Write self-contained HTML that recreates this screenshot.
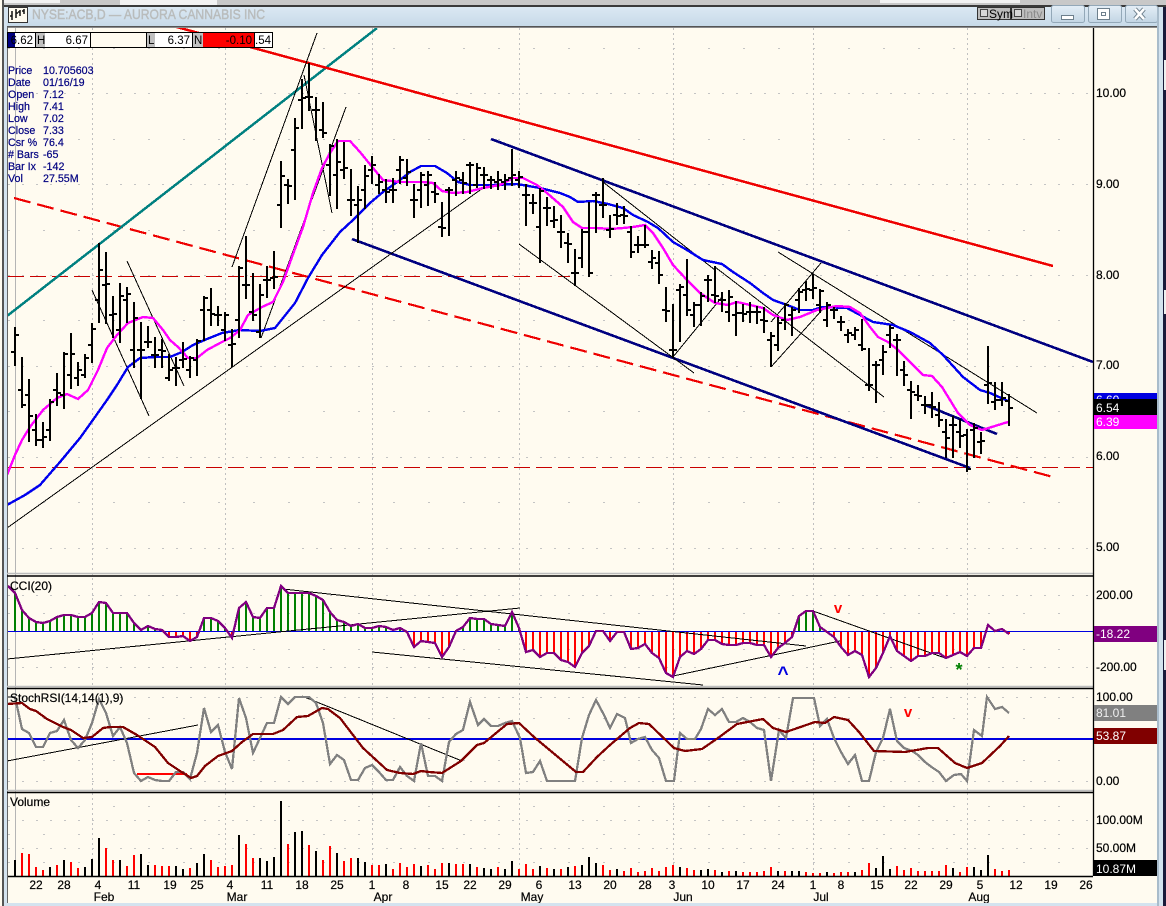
<!DOCTYPE html>
<html><head><meta charset="utf-8"><title>NYSE:ACB,D</title>
<style>
html,body{margin:0;padding:0;background:#fffbf0}
svg{display:block}
text{font-family:"Liberation Sans",sans-serif;font-size:12px;fill:#000}
.k text{stroke:#000;stroke-width:.2px}
.i text{font-size:10.7px;fill:#000080;stroke:#000080;stroke-width:.2px}
.c{text-anchor:middle}
.t{stroke:#b9bcbc;stroke-width:.45px}
</style></head><body>
<svg xmlns="http://www.w3.org/2000/svg" width="1166" height="906" viewBox="0 0 1166 906">
<defs>
<linearGradient id="tb" x1="0" y1="0" x2="0" y2="1"><stop offset="0" stop-color="#dbe8f3"/><stop offset="1" stop-color="#c6d9e8"/></linearGradient>
<linearGradient id="bt" x1="0" y1="0" x2="0" y2="1"><stop offset="0" stop-color="#e4eef6"/><stop offset="1" stop-color="#c2d5e4"/></linearGradient>
<clipPath id="p1"><rect x="8" y="28" width="1085" height="546"/></clipPath>
<clipPath id="p2"><rect x="8" y="577" width="1085" height="109"/></clipPath>
<clipPath id="p3"><rect x="8" y="689" width="1085" height="100"/></clipPath>
</defs>
<!-- window frame -->
<rect width="1166" height="906" fill="#d4e3ef"/>
<rect x="0" y="0" width="1166" height="6" fill="#c8c8c8"/>
<rect x="120" y="0" width="97" height="5" fill="#f2f2f2"/>
<rect x="0" y="0" width="60" height="3" fill="#f2f2f2"/>
<rect x="880" y="0" width="140" height="3" fill="#f2f2f2"/>
<rect x="0" y="5" width="1166" height="2" fill="#3a3a3a"/>
<rect x="0" y="7" width="1166" height="20" fill="url(#tb)"/>
<rect x="0" y="0" width="3" height="906" fill="#fffbf0"/>
<rect x="2" y="0" width="2" height="906" fill="#555"/>
<rect x="4" y="7" width="3" height="899" fill="#d4e3ef"/>
<rect x="1163" y="7" width="3" height="899" fill="#1a1a3a"/>
<rect x="1164" y="60" width="2" height="30" fill="#f0f0f0"/>
<rect x="1164" y="290" width="2" height="24" fill="#f0f0f0"/>
<rect x="1164" y="640" width="2" height="30" fill="#f0f0f0"/>
<!-- title -->
<rect x="8.5" y="7.5" width="19" height="15" fill="#fffbf0" stroke="#333"/>
<path d="M12 11V20M16 9V18M20 10V16M24 9V14M10 16h2M16 13h2M18 12h2M22 11h2" stroke="#111" stroke-width="1.5" fill="none"/>
<text x="32" y="19" class="t" style="font-size:14px;fill:#b9bcbc" textLength="233" lengthAdjust="spacingAndGlyphs">NYSE:ACB,D — AURORA CANNABIS INC</text>
<!-- sym/intv -->
<rect x="977.5" y="7.5" width="33" height="12" fill="#bdbdbd" stroke="#333"/>
<rect x="1011.5" y="7.5" width="33" height="12" fill="#bdbdbd" stroke="#333"/>
<rect x="980.5" y="9.5" width="7" height="7" fill="#d8d8d8" stroke="#444"/>
<rect x="1014.5" y="9.5" width="7" height="7" fill="#d8d8d8" stroke="#444"/>
<text x="989" y="18" style="font-size:12px">Sym</text>
<text x="1023" y="18" style="font-size:12px;fill:#8a8a8a">Intv</text>
<!-- window buttons -->
<rect x="1051.5" y="5.5" width="33" height="17" rx="2" fill="url(#bt)" stroke="#93a8b8"/>
<rect x="1088.5" y="5.5" width="33" height="17" rx="2" fill="url(#bt)" stroke="#93a8b8"/>
<rect x="1125.5" y="5.5" width="32" height="17" rx="2" fill="url(#bt)" stroke="#93a8b8"/>
<rect x="1061.5" y="15.5" width="12" height="4" fill="#fff" stroke="#6d7f8c"/>
<rect x="1097.5" y="8.5" width="12" height="11" fill="#fff" stroke="#6d7f8c"/>
<rect x="1101.5" y="12.5" width="4" height="3" fill="#fff" stroke="#6d7f8c"/>
<path d="M1135 9L1144 19M1144 9L1135 19" stroke="#6d7f8c" stroke-width="4.5"/>
<path d="M1135 9L1144 19M1144 9L1135 19" stroke="#fff" stroke-width="2.6"/>
<!-- chart background -->
<rect x="7" y="27" width="1150" height="876" fill="#fffbf0"/>
<rect x="7" y="27" width="1150" height="1" fill="#8a8a8a"/>
<rect x="7" y="26" width="1150" height="1" fill="#555"/>
<rect x="7" y="27" width="1" height="876" fill="#666"/>
<rect x="1157" y="7" width="2" height="899" fill="#a9bccb"/>
<rect x="1159" y="7" width="4" height="899" fill="#d4e3ef"/>
<!-- vertical grid -->
<path d="M15.5 28V876" stroke="#b5b5b5" stroke-width="1"/>
<path d="M92.5 28V876M225.5 28V876M372.5 28V876M519.5 28V876M673.5 28V876M813.5 28V876M967.5 28V876" stroke="#c0c0c0" stroke-width="1" stroke-dasharray="2 3"/>
<!-- horizontal grid majors -->
<path d="M8 93.5H1093M8 184.5H1093M8 275.5H1093M8 366.5H1093M8 457.5H1093M8 548.5H1093M8 595.5H1093M8 667.5H1093M8 697.5H1093M8 781.5H1093M8 820.5H1093M8 848.5H1093" stroke="#c4c4c4" stroke-width="1" stroke-dasharray="2 12"/>
<path d="M8 48.5H1093M8 139.5H1093M8 230.5H1093M8 320.5H1093M8 411.5H1093M8 502.5H1093M8 613.5H1093M8 649.5H1093M8 718.5H1093M8 760.5H1093M8 806.5H1093M8 834.5H1093M8 862.5H1093" stroke="#c4c4c4" stroke-width="1" stroke-dasharray="2 33"/>
<!-- PRICE PANEL -->
<g clip-path="url(#p1)" fill="none" shape-rendering="crispEdges">
<path d="M8 276.5H570" stroke="#c80000" stroke-width="1" stroke-dasharray="16 6"/>
<path d="M8 467.5H1093" stroke="#c80000" stroke-width="1" stroke-dasharray="16 6"/>
<path d="M14 198L1053 477" stroke="#ee0000" stroke-width="2.2" stroke-dasharray="17 7"/>
<path d="M7 316L377 28" stroke="#008080" stroke-width="2.5"/>
<path d="M173 26L1053 266" stroke="#ee0000" stroke-width="2.5"/>
<path d="M491 139L1093 362M352 239L970 468M925 405L997 434" stroke="#000080" stroke-width="2.6"/>
<path d="M7 528L483 188M232 267L317 33M261 338L346 107M304 75L332 213M92 290L149 416M127 261L184 386M519 244L694 373M603 182L715 270M715 267L884 397M778 252L1037 413M673 357L722 297M771 367L822 310M771 322L821 263" stroke="#000" stroke-width="1"/>
<path d="M7 505L25 495L40 485L60 462L80 438L95 417L107 400L117 385L128 367L140 358L155 357L170 357L182 352L193 345L207 339L222 333L240 330L260 331L275 328L295 303L308 278L322 255L340 232L353 220L370 203L383 192L400 180L410 172L421 166L435 166L447 173L458 182L470 185L493 185L517 184L540 188L560 193L570 197L578 202L593 201L608 204L623 208L633 215L648 222L658 228L673 242L687 250L703 260L722 264L733 272L750 283L763 293L773 300L787 305L800 310L813 310L822 307L847 308L860 315L873 322L893 325L910 332L930 343L943 355L963 377L980 390L990 393L1008 401" stroke="#0000ee" stroke-width="2.4"/>
<path d="M7 475L15 455L22 440L30 427L43 410L57 398L67 394L78 399L88 390L98 370L107 348L117 335L128 323L143 317L153 318L163 330L170 340L178 347L188 358L197 358L207 350L220 343L230 338L240 330L248 315L262 307L273 302L283 282L292 257L303 227L313 193L322 168L330 153L338 141L350 141L360 152L373 168L383 180L400 182L413 182L423 182L433 183L442 191L453 193L467 192L483 188L500 185L513 178L523 178L537 185L547 193L563 207L573 222L582 228L597 228L610 229L623 228L633 227L645 225L653 233L663 248L673 265L687 280L700 293L715 303L728 305L737 302L750 305L763 308L773 315L787 320L800 317L817 310L837 306L850 307L860 313L870 327L878 337L888 342L898 350L910 362L923 375L932 376L942 387L950 400L958 413L970 425L982 430L1008 422" stroke="#ff00ff" stroke-width="2.4"/>
<path stroke="#000" stroke-width="2" stroke-linecap="square" d="M15 328V365M12 352H15M15 335H18M22 358V407M19 390H22M22 405H25M29 380V441M26 395H29M29 416H32M36 415V445M33 430H36M36 440H39M43 423V447M40 440H43M43 437H46
M50 400V440M47 430H50M50 402H53M57 374V405M54 390H57M57 393H60M64 353V408M61 395H64M64 354H67M71 334V388M68 375H71M71 354H74M78 363V385M75 378H78M78 370H81
M85 355V377M82 375H85M85 358H88M92 324V362M89 345H92M92 329H95M99 244V322M96 300H99M99 270H102M106 253V323M103 285H106M106 284H109M113 297V337M110 315H113M113 314H116
M120 284V342M117 330H120M120 296H123M127 288V322M124 300H127M127 294H130M134 303V367M131 350H134M134 318H137M141 323V398M138 350H141M141 350H144M148 327V347M145 342H148M148 342H151
M155 338V367M152 355H155M155 355H158M162 340V367M159 350H162M162 351H165M169 355V380M166 378H169M169 370H172M176 358V385M173 368H176M176 368H179M183 343V367M180 360H183M183 359H186
M190 357V377M187 370H190M190 358H193M197 340V375M194 360H197M197 341H200M204 297V340M201 310H204M204 298H207M211 289V325M208 310H211M211 314H214M218 307V325M215 315H218M218 315H221
M225 313V340M222 330H225M225 315H228M232 330V366M229 345H232M232 344H235M239 267V337M236 320H239M239 268H242M246 237V298M243 285H246M246 285H249M253 274V320M250 312H253M253 315H256
M260 285V337M257 332H260M260 295H263M267 267V297M264 280H267M267 280H270M274 252V288M271 278H274M274 277H277M281 162V227M278 205H281M281 176H284M288 180V203M285 185H288M288 186H291
M295 119V199M292 150H295M295 128H298M302 80V128M299 100H302M302 98H305M309 64V110M306 97H309M309 97H312M316 98V140M313 110H316M316 110H319M323 103V137M320 130H323M323 133H326
M330 145V195M327 165H330M330 146H333M337 140V208M334 175H337M337 162H340M344 143V178M341 170H344M344 168H347M351 170V215M348 200H351M351 200H354M358 187V242M355 205H358M358 200H361
M365 166V208M362 190H365M365 176H368M372 157V183M369 170H372M372 165H375M379 175V193M376 185H379M379 182H382M386 180V202M383 190H386M386 192H389M393 179V202M390 190H393M393 190H396
M400 157V183M397 170H400M400 160H403M407 160V185M404 178H407M407 172H410M414 185V217M411 200H414M414 200H417M421 173V207M418 190H421M421 175H424M428 172V205M425 185H428M428 175H431
M435 183V202M432 192H435M435 194H438M442 203V236M439 227H442M442 228H445M449 188V235M446 190H449M449 190H452M456 172V195M453 180H456M456 178H459M463 173V193M460 180H463M463 183H466
M470 163V193M467 165H470M470 165H473M477 164V187M474 185H477M477 168H480M484 168V188M481 175H484M484 175H487M491 177V188M488 180H491M491 180H494M498 172V189M495 182H498M498 180H501
M505 175V189M502 182H505M505 180H508M512 150V185M509 178H512M512 175H515M519 172V187M516 180H519M519 177H522M526 185V225M523 195H526M526 195H529M533 195V213M530 203H533M533 203H536
M540 189V262M537 227H540M540 191H543M547 198V225M544 208H547M547 208H550M554 207V227M551 221H554M554 220H557M561 216V247M558 232H561M561 232H564M568 234V262M565 243H568M568 244H571
M575 250V285M572 273H575M575 273H578M582 230V267M579 258H582M582 232H585M589 203V276M586 232H589M589 273H592M596 193V232M593 195H596M596 195H599M603 179V217M600 205H603M603 205H606
M610 216V237M607 230H610M610 229H613M617 204V224M614 215H617M617 216H620M624 207V223M621 215H624M624 216H627M631 227V257M628 232H631M631 252H634M638 237V252M635 245H638M638 245H641
M645 226V247M642 245H645M645 245H648M652 251V268M649 262H652M652 258H655M659 252V283M656 263H659M659 275H662M666 288V321M663 310H666M666 311H669M673 305V357M670 350H673M673 350H676
M680 285V341M677 290H680M680 287H683M687 260V315M684 295H687M687 310H690M694 303V326M691 315H694M694 305H697M701 293V325M698 305H701M701 296H704M708 276V301M705 280H708M708 280H711
M715 267V302M712 295H715M715 296H718M722 293V311M719 300H722M722 300H725M729 291V321M726 312H729M729 297H732M736 302V335M733 315H736M736 313H739M743 305V321M740 313H743M743 314H746
M750 303V322M747 312H750M750 312H753M757 307V323M754 312H757M757 312H760M764 308V332M761 320H764M764 321H767M771 333V366M768 340H771M771 336H774M778 318V350M775 345H778M778 323H781
M785 304V329M782 320H785M785 305H788M792 308V335M789 315H792M792 310H795M799 289V312M796 300H799M799 292H802M806 282V300M803 290H806M806 289H809M813 275V298M810 290H813M813 288H816
M820 290V312M817 305H820M820 291H823M827 303V326M824 320H827M827 305H830M834 308V318M831 310H834M834 310H837M841 317V330M838 322H841M841 322H844M848 330V342M845 335H848M848 333H851
M855 328V339M852 335H855M855 330H858M862 320V350M859 345H862M862 349H865M869 349V390M866 385H869M869 385H872M876 362V402M873 365H876M876 365H879M883 346V374M880 360H883M883 352H886
M890 326V347M887 335H890M890 328H893M897 335V375M894 340H897M897 340H900M904 362V385M901 370H904M904 375H907M911 382V418M908 390H911M911 392H914M918 386V400M915 395H918M918 396H921
M925 397V413M922 405H925M925 405H928M932 393V417M929 405H932M932 407H935M939 403V426M936 415H939M939 420H942M946 420V457M943 432H946M946 438H949M953 417V457M950 425H953M953 425H956
M960 420V447M957 432H960M960 436H963M967 430V471M964 435H967M967 469H970M974 424V457M971 430H974M974 428H977M981 433V453M978 442H981M981 441H984M988 347V403M985 385H988M988 383H991
M995 383V409M992 402H995M995 400H998M1002 383V405M999 400H1002M1002 398H1005M1009 395V425M1006 401H1009M1009 408H1012"/>
</g>
<!-- header boxes -->
<rect x="7.5" y="32.5" width="265" height="15" fill="#fffbf0" stroke="#000"/>
<rect x="8" y="33" width="7" height="14" fill="#000080"/>
<rect x="15" y="33" width="20" height="14" fill="#fff"/>
<rect x="36" y="33" width="9" height="14" fill="#c0c0c0"/>
<rect x="45" y="33" width="45" height="14" fill="#fff"/>
<rect x="147" y="33" width="8" height="14" fill="#c0c0c0"/>
<rect x="155" y="33" width="37" height="14" fill="#fff"/>
<rect x="193" y="33" width="10" height="14" fill="#c0c0c0"/>
<rect x="203" y="33" width="51" height="14" fill="#f00"/>
<rect x="254" y="33" width="18" height="14" fill="#fff"/>
<path d="M35.5 32V47M90.5 32V47M146.5 32V47M192.5 32V47M254.5 32V47" stroke="#000"/>
<g>
<text x="33" y="44" text-anchor="end" style="font-size:11.5px">6.62</text>
<text x="37" y="44" style="font-size:11.5px">H</text>
<text x="88" y="44" text-anchor="end" style="font-size:11.5px">6.67</text>
<text x="148" y="44" style="font-size:11.5px">L</text>
<text x="190" y="44" text-anchor="end" style="font-size:11.5px">6.37</text>
<text x="194" y="44" style="font-size:11.5px">N</text>
<text x="252" y="44" text-anchor="end" style="font-size:11.5px">-0.10</text>
<text x="271" y="44" text-anchor="end" style="font-size:11.5px">.54</text>
</g>
<!-- info -->
<g class="i">
<text x="8" y="74">Price</text><text x="43" y="74">10.705603</text>
<text x="8" y="86">Date</text><text x="43" y="86">01/16/19</text>
<text x="8" y="98">Open</text><text x="43" y="98">7.12</text>
<text x="8" y="110">High</text><text x="43" y="110">7.41</text>
<text x="8" y="122">Low</text><text x="43" y="122">7.02</text>
<text x="8" y="134">Close</text><text x="43" y="134">7.33</text>
<text x="8" y="146">Csr %</text><text x="43" y="146">76.4</text>
<text x="8" y="158"># Bars</text><text x="43" y="158">-65</text>
<text x="8" y="170">Bar Ix</text><text x="43" y="170">-142</text>
<text x="8" y="182">Vol</text><text x="43" y="182">27.55M</text>
</g>
<!-- panel separators -->
<path d="M7 573.5H1157M7 686.5H1157M7 790.5H1157" stroke="#bdbdbd" stroke-width="1.5"/>
<path d="M7 576H1157M7 688.5H1157M7 792.5H1157" stroke="#000" stroke-width="1.4"/>
<!-- CCI -->
<g clip-path="url(#p2)" fill="none" shape-rendering="crispEdges">
<path stroke="#008000" stroke-width="2" d="M15 631V593M22 631V610M29 631V618M36 631V622M43 631V623M50 631V621M57 631V617M64 631V615M71 631V615M78 631V617M85 631V617M92 631V613M99 631V602M106 631V603M113 631V613M120 631V613M127 631V613M134 631V623M141 631V630M148 631V626M155 631V629M162 631V630M204 631V618M211 631V618M218 631V621M225 631V628M239 631V608M246 631V602M253 631V617M260 631V618M267 631V608M274 631V608M281 631V586M288 631V593M295 631V593M302 631V593M309 631V593M316 631V596M323 631V600M330 631V612M337 631V620M344 631V622M351 631V626M358 631V624M365 631V628M372 631V628M379 631V626M386 631V627M393 631V630M400 631V628M463 631V627M470 631V618M477 631V619M484 631V619M491 631V624M498 631V625M505 631V626M512 631V612M519 631V628M799 631V616M806 631V611M813 631V611M820 631V627"/>
<path stroke="#f00" stroke-width="2" d="M169 631V637M176 631V637M183 631V636M190 631V641M197 631V637M232 631V638M407 631V632M414 631V647M421 631V641M428 631V642M435 631V643M442 631V657M449 631V647M526 631V652M533 631V650M540 631V657M547 631V653M554 631V653M561 631V660M568 631V662M575 631V667M582 631V653M589 631V646M610 631V641M617 631V632M624 631V632M631 631V649M638 631V648M645 631V644M652 631V653M659 631V658M666 631V673M673 631V677M680 631V657M687 631V651M694 631V654M701 631V649M708 631V640M715 631V640M722 631V644M729 631V645M736 631V645M743 631V643M750 631V643M757 631V645M764 631V645M771 631V657M778 631V648M785 631V643M792 631V637M827 631V632M834 631V637M841 631V647M848 631V655M855 631V651M862 631V655M869 631V677M876 631V668M883 631V653M890 631V636M897 631V651M904 631V656M911 631V661M918 631V656M925 631V656M932 631V653M939 631V653M946 631V658M953 631V655M960 631V652M967 631V656M974 631V648M981 631V648M1009 631V634"/>
<path d="M8 631.5H1093" stroke="#0000e0" stroke-width="1"/>
<path d="M7 659L520 608M283 589L806 646M372 652L703 685M673 676L840 641M813 611L945 658" stroke="#000" stroke-width="1"/>
<path stroke="#800080" stroke-width="2.3" d="M8 586L15 593L22 610L29 618L36 622L43 623L50 621L57 617L64 615L71 615L78 617L85 617L92 613L99 602L106 603L113 613L120 613L127 613L134 623L141 630L148 626L155 629L162 630L169 637L176 637L183 636L190 641L197 637L204 618L211 618L218 621L225 628L232 638L239 608L246 602L253 617L260 618L267 608L274 608L281 586L288 593L295 593L302 593L309 593L316 596L323 600L330 612L337 620L344 622L351 626L358 624L365 628L372 628L379 626L386 627L393 630L400 628L407 632L414 647L421 641L428 642L435 643L442 657L449 647L456 631L463 627L470 618L477 619L484 619L491 624L498 625L505 626L512 612L519 628L526 652L533 650L540 657L547 653L554 653L561 660L568 662L575 667L582 653L589 646L596 631L603 631L610 641L617 632L624 632L631 649L638 648L645 644L652 653L659 658L666 673L673 677L680 657L687 651L694 654L701 649L708 640L715 640L722 644L729 645L736 645L743 643L750 643L757 645L764 645L771 657L778 648L785 643L792 637L799 616L806 611L813 611L820 627L827 632L834 637L841 647L848 655L855 651L862 655L869 677L876 668L883 653L890 636L897 651L904 656L911 661L918 656L925 656L932 653L939 653L946 658L953 655L960 652L967 656L974 648L981 648L988 625L995 631L1002 629L1009 634"/>
</g>
<g class="k"><text x="10" y="590">CCI(20)</text></g>
<text x="838" y="613" class="c" style="font-size:15px;font-weight:bold;fill:#f00">v</text>
<text x="783" y="680" class="c" style="font-size:19px;font-weight:bold;fill:#0000e0">^</text>
<text x="959" y="676" class="c" style="font-size:18px;font-weight:bold;fill:#008000">*</text>
<!-- STOCH -->
<g clip-path="url(#p3)" fill="none" shape-rendering="crispEdges">
<path d="M8 739H1093" stroke="#0000e0" stroke-width="2"/>
<path d="M137 774H187" stroke="#f00" stroke-width="2"/>
<path d="M7 761L198 725M302 696L462 761" stroke="#000" stroke-width="1"/>
<path stroke="#808080" stroke-width="2.3" d="M7 697L15 697L22 729L29 733L36 747L43 747L50 733L57 731L64 720L71 740L78 748L85 740L92 723L99 699L106 713L113 736L120 727L127 743L134 773L141 781L148 777L155 780L162 781L169 781L176 772L183 772L190 779L197 753L204 708L211 732L218 725L225 752L232 769L239 698L246 718L253 753L260 738L267 723L274 723L281 697L288 704L295 697L309 697L316 703L323 723L330 764L337 755L344 760L351 780L358 780L365 768L372 765L379 772L386 780L393 780L400 767L407 776L414 781L421 743L428 776L435 776L442 781L449 742L456 734L463 730L470 702L478 725L484 719L491 726L498 726L505 723L512 721L520 738L526 773L533 772L540 761L547 781L575 781L582 738L589 715L596 700L604 715L610 728L617 714L625 718L631 743L638 739L645 737L652 750L659 758L666 781L674 781L680 733L687 739L695 739L701 729L708 709L715 715L722 709L729 722L736 722L743 718L750 722L757 728L764 730L771 781L779 730L786 738L793 698L800 698L814 698L820 726L827 719L834 738L841 752L848 764L855 755L862 781L869 781L876 752L883 738L890 709L897 741L904 748L912 751L918 755L925 762L933 768L939 772L946 781L954 775L961 774L967 781L974 730L982 736L987 697L995 709L1002 707L1009 713"/>
<path stroke="#800000" stroke-width="2.3" d="M7 704L22 703L30 709L36 711L47 719L63 727L71 730L83 738L92 737L103 728L110 727L123 727L137 735L155 747L168 763L180 771L191 778L197 776L205 766L218 756L232 751L242 742L253 734L273 734L283 730L297 717L308 716L322 708L328 709L340 718L353 735L363 748L387 770L400 773L413 774L421 771L429 772L442 773L461 761L477 745L484 743L507 724L519 723L534 737L576 772L583 772L597 757L610 745L630 728L639 723L649 724L674 748L685 751L702 749L718 738L737 724L763 719L773 728L786 732L815 722L825 723L834 717L848 720L859 732L874 751L905 752L928 748L938 748L955 763L967 768L982 763L1000 746L1009 736"/>
</g>
<g class="k"><text x="10" y="702">StochRSI(14,14(1),9)</text></g>
<text x="908" y="717" class="c" style="font-size:15px;font-weight:bold;fill:#f00">v</text>
<!-- VOLUME -->
<g class="k"><text x="10" y="806">Volume</text></g>
<g fill="none" stroke-width="2" shape-rendering="crispEdges">
<path stroke="#000" d="M15 876V860M50 876V867M64 876V860M85 876V867M92 876V859M99 876V838M120 876V860M141 876V854M148 876V865M176 876V866M183 876V869M197 876V863M204 876V854M239 876V835M260 876V858M267 876V861M274 876V857M281 876V801M295 876V832M302 876V831M316 876V851M337 876V853M358 876V858M365 876V862M386 876V864M421 876V866M449 876V863M470 876V864M484 876V868M491 876V869M505 876V869M512 876V861M540 876V866M554 876V869M568 876V867M582 876V865M589 876V857M596 876V863M617 876V869M680 876V867M701 876V870M708 876V869M722 876V872M736 876V871M778 876V871M792 876V871M799 876V871M827 876V872M855 876V872M876 876V868M883 876V856M890 876V869M953 876V868M974 876V867M981 876V870M988 876V855"/>
<path stroke="#f00" d="M22 876V853M29 876V854M36 876V867M43 876V870M57 876V865M71 876V862M78 876V868M106 876V848M113 876V860M127 876V866M134 876V855M155 876V865M162 876V866M169 876V866M190 876V868M211 876V860M218 876V867M225 876V866M232 876V865M246 876V844M253 876V858M288 876V844M309 876V845M323 876V860M330 876V846M344 876V861M351 876V858M372 876V865M379 876V865M393 876V869M400 876V863M407 876V867M414 876V864M428 876V865M435 876V869M442 876V863M456 876V864M463 876V864M477 876V867M498 876V867M519 876V869M526 876V864M533 876V869M547 876V868M561 876V869M575 876V866M603 876V865M610 876V870M624 876V871M631 876V868M638 876V872M645 876V871M652 876V868M659 876V871M666 876V867M673 876V865M687 876V868M694 876V870M715 876V870M729 876V871M743 876V872M750 876V872M757 876V872M764 876V871M771 876V867M785 876V871M806 876V872M813 876V873M820 876V873M834 876V873M841 876V872M848 876V872M862 876V870M869 876V863M897 876V866M904 876V870M911 876V868M918 876V871M925 876V871M932 876V871M939 876V871M946 876V865M960 876V872M967 876V867M995 876V869M1002 876V871M1009 876V870"/>
</g>
<path d="M8 876.5H1093" stroke="#000" stroke-width="1.4"/>
<!-- axis -->
<rect x="1094" y="28" width="63" height="848" fill="#fffbf0"/>
<path d="M1093.5 28V876" stroke="#000" stroke-width="1.3"/>
<g class="k">
<text x="1096" y="97">10.00</text>
<text x="1096" y="188">9.00</text>
<text x="1096" y="279">8.00</text>
<text x="1096" y="369">7.00</text>
<text x="1096" y="460">6.00</text>
<text x="1096" y="551">5.00</text>
<text x="1096" y="599">200.00</text>
<text x="1096" y="671">-200.00</text>
<text x="1096" y="701">100.00</text>
<text x="1096" y="785">0.00</text>
<text x="1096" y="824">100.00M</text>
<text x="1096" y="852">50.00M</text>
</g>
<rect x="1094" y="393" width="63" height="7" fill="#0000e0"/>
<text x="1096" y="404" style="fill:#fff">6.60</text>
<rect x="1094" y="399" width="63" height="16" fill="#000"/>
<text x="1096" y="412" style="fill:#fff">6.54</text>
<rect x="1094" y="415" width="63" height="14" fill="#ff00ff"/>
<text x="1096" y="426" style="fill:#fff">6.39</text>
<rect x="1094" y="626" width="63" height="16" fill="#800080"/>
<text x="1096" y="638" style="fill:#fff">-18.22</text>
<rect x="1094" y="705" width="63" height="16" fill="#808080"/>
<text x="1096" y="717" style="fill:#eee">81.01</text>
<rect x="1094" y="728" width="63" height="16" fill="#800000"/>
<text x="1096" y="740" style="fill:#fff">53.87</text>
<rect x="1094" y="860" width="63" height="16" fill="#000"/>
<text x="1096" y="873" style="fill:#fff">10.87M</text>
<!-- date labels -->
<g class="c k">
<text x="36" y="889">22</text><text x="64" y="889">28</text><text x="98" y="889">4</text><text x="134" y="889">11</text><text x="170" y="889">19</text><text x="197" y="889">25</text><text x="230" y="889">4</text><text x="267" y="889">11</text><text x="302" y="889">18</text><text x="337" y="889">25</text><text x="372" y="889">1</text><text x="406" y="889">8</text><text x="442" y="889">15</text><text x="470" y="889">22</text><text x="505" y="889">29</text><text x="539" y="889">6</text><text x="575" y="889">13</text><text x="610" y="889">20</text><text x="645" y="889">28</text><text x="672" y="889">3</text><text x="708" y="889">10</text><text x="743" y="889">17</text><text x="778" y="889">24</text><text x="813" y="889">1</text><text x="841" y="889">8</text><text x="877" y="889">15</text><text x="911" y="889">22</text><text x="946" y="889">29</text><text x="980" y="889">5</text><text x="1016" y="889">12</text><text x="1051" y="889">19</text><text x="1086" y="889">26</text>
<text x="104" y="901">Feb</text><text x="237" y="901">Mar</text><text x="383" y="901">Apr</text><text x="532" y="901">May</text><text x="683" y="901">Jun</text><text x="821" y="901">Jul</text><text x="979" y="901">Aug</text>
</g>
<rect x="4" y="903" width="1153" height="3" fill="#d4e3ef"/>
</svg>
</body></html>
